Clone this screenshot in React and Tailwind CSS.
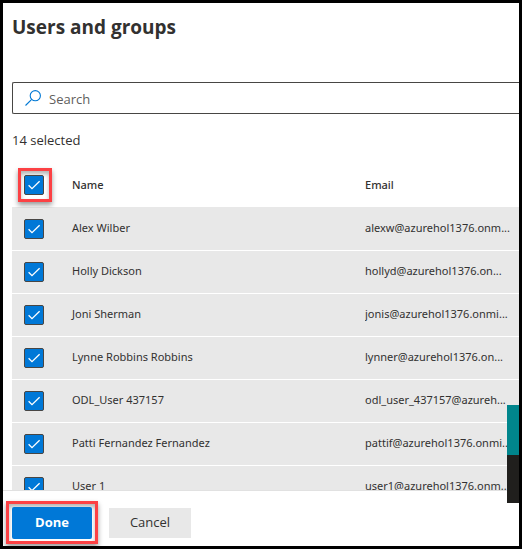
import React from "react";

const users = [
  { name: "Alex Wilber", email: "alexw@azurehol1376.onm..." },
  { name: "Holly Dickson", email: "hollyd@azurehol1376.on..." },
  { name: "Joni Sherman", email: "jonis@azurehol1376.onmi..." },
  { name: "Lynne Robbins Robbins", email: "lynner@azurehol1376.on..." },
  { name: "ODL_User 437157", email: "odl_user_437157@azureh..." },
  { name: "Patti Fernandez Fernandez", email: "pattif@azurehol1376.onmi..." },
  { name: "User 1", email: "user1@azurehol1376.onm..." },
];

function Checkbox({ label }) {
  return (
    <span className="relative block size-5">
      <input
        type="checkbox"
        defaultChecked
        aria-label={label}
        className="peer block size-5 appearance-none rounded-xs border border-[#484644] bg-white checked:bg-[#0078d7]"
      />
      <svg
        viewBox="0 0 20 20"
        className="pointer-events-none absolute inset-0 hidden size-5 peer-checked:block"
        fill="none"
        stroke="#ffffff"
        strokeWidth="1.3"
        aria-hidden="true"
      >
        <path d="M4.6 10.2 8 13.6 15.6 6.2" />
      </svg>
    </span>
  );
}

export default function App() {
  return (
    <div className="relative flex h-screen flex-col overflow-hidden border-3 border-black bg-white font-['Open_Sans','Noto_Sans',sans-serif] text-[#323130]">
      <main className="min-h-0 flex-1 overflow-hidden pl-[9px]">
        <h1 className="pt-2 text-[19px] leading-8 font-bold">Users and groups</h1>

        <label className="mt-[39px] flex h-8 items-center gap-2 rounded-l-xs border border-r-0 border-[#484644] pl-3">
          <svg
            viewBox="0 0 16 16"
            className="size-4 shrink-0"
            fill="none"
            stroke="#0078d4"
            strokeWidth="1.1"
            aria-hidden="true"
          >
            <circle cx="10.3" cy="5.7" r="5.1" />
            <path d="M6.7 9.3.5 15.5" />
          </svg>
          <input
            type="text"
            aria-label="Search"
            placeholder="Search"
            className="h-full min-w-0 flex-1 bg-transparent pt-px text-[13px] outline-none placeholder:text-[#605e5c]"
          />
        </label>

        <p className="mt-4 text-[13px] leading-5">14 selected</p>

        <table className="mt-[13px] w-full table-fixed border-separate border-spacing-0 text-left font-['Noto_Sans','Open_Sans',sans-serif] text-[11px] leading-4">
          <colgroup>
            <col className="w-15" />
            <col className="w-[293px]" />
            <col />
          </colgroup>
          <thead>
            <tr>
              <th className="h-[45px] border-b border-[#e8e8e8] py-0 pr-0 pl-[6px]">
                <span className="block w-[34px] border-3 border-[#fc4144] px-[3px] py-1 shadow-[0_3px_5px_rgba(0,0,0,0.4),inset_0_3px_4px_rgba(0,0,0,0.3)]">
                  <Checkbox label="Select all" />
                </span>
              </th>
              <th className="border-b border-[#e8e8e8] p-0 font-medium">Name</th>
              <th className="border-b border-[#e8e8e8] p-0 font-medium">Email</th>
            </tr>
          </thead>
          <tbody>
            {users.map((user) => (
              <tr key={user.name} className="bg-[#e8e8e8]">
                <td className="h-[43px] border-b border-white py-0 pr-0 pl-3">
                  <Checkbox label={"Select " + user.name} />
                </td>
                <td className="border-b border-white px-0 pt-0 pb-[2px]">{user.name}</td>
                <td className="overflow-hidden border-b border-white px-0 pt-0 pb-[2px] whitespace-nowrap">
                  {user.email}
                </td>
              </tr>
            ))}
          </tbody>
        </table>
      </main>

      <footer className="flex h-14 shrink-0 items-center gap-[11px] border-t border-[#e1e1e1] pt-2 pl-[3px]">
        <span className="border-3 border-[#fc4144] px-[3px] pt-[3px] pb-[2px] shadow-[0_3px_5px_rgba(0,0,0,0.4),inset_0_3px_4px_rgba(0,0,0,0.3)]">
          <button
            type="button"
            className="block h-8 w-20 rounded-xs bg-[#0078d7] text-[13px] font-bold text-white"
          >
            Done
          </button>
        </span>
        <button type="button" className="h-[30px] w-[82px] bg-[#e8e8e8] text-[13px] font-medium">
          Cancel
        </button>
      </footer>

      <aside className="absolute right-0 bottom-[43px] w-3" aria-hidden="true">
        <div className="h-[50px] bg-[#00858c]" />
        <div className="h-12 bg-[#201f1d]" />
      </aside>
    </div>
  );
}
